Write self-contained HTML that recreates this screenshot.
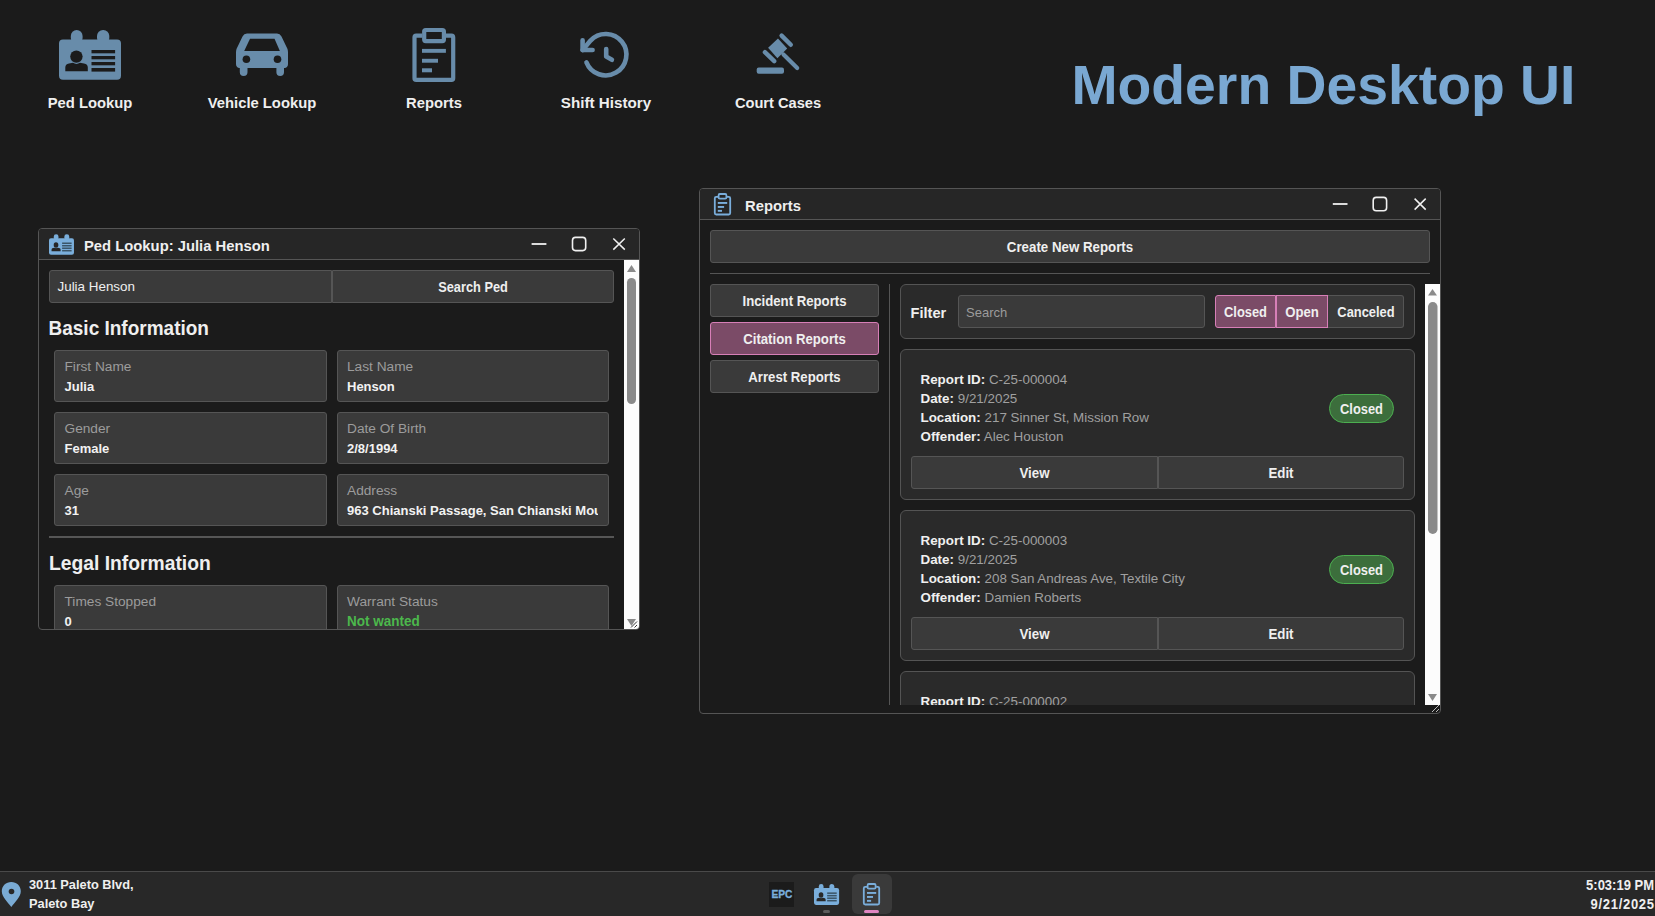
<!DOCTYPE html>
<html><head><meta charset="utf-8">
<style>
*{margin:0;padding:0;box-sizing:border-box}
html,body{width:1655px;height:916px;overflow:hidden;background:#1b1b1b;font-family:"Liberation Sans",sans-serif;color:#efefef;position:relative}
.a{position:absolute}
.t{position:absolute;white-space:nowrap;line-height:1}
.b{font-weight:bold}
.ml{width:172px;text-align:center;font-size:14.8px;font-weight:bold;top:95.5px;color:#efefef}
svg{position:absolute;overflow:visible}
.sy{transform:scaleY(1.08);transform-origin:0 0.847em}
.sy4{transform:scaleY(1.04);transform-origin:0 0.847em}
.sy6{transform:scaleY(1.06);transform-origin:0 0.847em}
.win{border:1px solid #555;border-radius:4px;background:#1b1b1b}
.ttl{background:#262626;border-bottom:1px solid #555}
.inp{background:#3a3a3a;border:1px solid #555}
.fld{width:273px;height:52px;background:#3a3a3a;border:1px solid #555;border-radius:3px}
.lbl{font-size:13.7px;color:#9c9c9c}
.val{font-size:13px;font-weight:bold;color:#f2f2f2}
.pk{background:#7b4b67;border:1px solid #d77fb7}
.pan{background:#2a2a2a;border:1px solid #545454;border-radius:6px}
.pill{background:#3c6e3c;border:1px solid #4caf50;border-radius:15px}
.ct{font-size:13.4px;color:#f0f0f0}
.ct b{font-weight:bold}
.g{color:#a0a0a0}
</style></head><body>

<!-- top menu -->
<svg style="left:0;top:0" width="900" height="130" viewBox="0 0 900 130">
  <g fill="#688caa">
    <!-- ped card -->
    <rect x="70.8" y="30" width="11.8" height="14" rx="5.9"/>
    <rect x="97" y="30" width="12.3" height="14" rx="6"/>
    <rect x="59" y="39.6" width="62" height="40.2" rx="4"/>
  </g>
  <g fill="#1b1b1b">
    <circle cx="76.4" cy="56.6" r="6.2"/>
    <path d="M65.3 71.3 L65.3 67.5 Q65.3 64 69 63.5 L73 62.8 Q76.4 65 80 62.8 L84 63.5 Q87.8 64 87.8 67.5 L87.8 71.3 Z"/>
    <rect x="91.5" y="50" width="23.6" height="3.3"/>
    <rect x="91.5" y="56" width="23.6" height="3.3"/>
    <rect x="91.5" y="62" width="23.6" height="3.3"/>
    <rect x="91.5" y="68" width="23.6" height="3.6"/>
  </g>
  <!-- car -->
  <path fill="#688caa" d="M247 33.6 L277 33.6 Q280 33.6 281.5 36.5 L287.5 49 Q288 50.5 288 52.5 L288 64 Q288 67 285 68 L284 68 L284 72.2 Q284 75.9 280.2 75.9 Q276.4 75.9 276.4 72.2 L276.4 68 L247.5 68 L247.5 72.2 Q247.5 75.9 243.6 75.9 Q239.8 75.9 239.8 72.2 L239.8 68 L239 68 Q236 67 236 64 L236 52.5 Q236 50.5 236.5 49 L242.5 36.5 Q244 33.6 247 33.6 Z"/>
  <g fill="#1b1b1b">
    <path d="M250 38.8 L274.5 38.8 L279.9 50.9 L244.2 50.9 Z"/>
    <circle cx="246.4" cy="59.3" r="3.8"/>
    <circle cx="277.5" cy="59.3" r="3.8"/>
  </g>
  <!-- reports clipboard -->
  <g fill="none" stroke="#688caa" stroke-width="4.2">
    <path d="M422.2 35.7 L416.2 35.7 Q414.5 35.7 414.5 37.4 L414.5 78.2 Q414.5 79.9 416.2 79.9 L451.5 79.9 Q453.2 79.9 453.2 78.2 L453.2 37.4 Q453.2 35.7 451.5 35.7 L445.9 35.7"/>
    <rect x="424.2" y="30" width="19.7" height="11.1" rx="1.5"/>
  </g>
  <g fill="#688caa">
    <rect x="422" y="48.9" width="23.9" height="3.9"/>
    <rect x="422" y="58.8" width="16" height="3.9"/>
    <rect x="422" y="68.3" width="10" height="4"/>
  </g>
  <!-- history -->
  <g fill="none" stroke="#688caa" stroke-width="4.6" stroke-linecap="round" stroke-linejoin="round">
    <path d="M586.45 62.3 A20.7 20.7 0 1 0 590.56 40.58 L582.6 50"/>
    <path d="M582.6 40.2 L582.6 50 L592.6 50"/>
    <path d="M606.2 49 L606.2 56.6 L611.9 59.8"/>
  </g>
  <!-- gavel -->
  <g fill="none" stroke="#688caa" stroke-linecap="round">
    <path d="M781.6 35.6 L790.8 44.8" stroke-width="4.4"/>
    <path d="M764.9 52.2 L774.2 61.2" stroke-width="4.4"/>
    <path d="M783.5 54.5 L797.2 68" stroke-width="4.2"/>
  </g>
  <g fill="#688caa">
    <path d="M778 38.6 L787.2 48.6 L777.4 58.2 L768.1 47.8 Z"/>
    <rect x="756.7" y="67.5" width="27.3" height="6.2" rx="2"/>
  </g>
</svg>
<div class="t ml" style="left:4px">Ped Lookup</div>
<div class="t ml" style="left:176px">Vehicle Lookup</div>
<div class="t ml" style="left:348px">Reports</div>
<div class="t ml" style="left:520px;font-size:15.2px;top:95.2px">Shift History</div>
<div class="t ml" style="left:692px;font-size:14.65px">Court Cases</div>

<div class="t b" style="left:1071.5px;top:57.9px;font-size:55.3px;color:#7aa8d2">Modern Desktop UI</div>

<!-- ===== Ped Lookup window ===== -->
<div class="a win" style="left:38px;top:228px;width:602px;height:402px"></div>
<div class="a ttl" style="left:39px;top:229px;width:600px;height:31px;border-top-left-radius:3px;border-top-right-radius:3px"></div>
<svg style="left:0;top:0" width="1" height="1" viewBox="0 0 1 1">
  <g transform="translate(49 234.2) scale(0.403 0.415)">
    <g transform="translate(-59 -30)">
      <g fill="#7aaedb">
        <rect x="70.8" y="30" width="11.8" height="14" rx="5.9"/>
        <rect x="97" y="30" width="12.3" height="14" rx="6"/>
        <rect x="59" y="39.6" width="62" height="40.2" rx="5"/>
      </g>
      <g fill="#262626">
        <ellipse cx="76.4" cy="56.2" rx="5.8" ry="6.6"/>
        <path d="M65.3 71.3 L65.3 67.5 Q65.3 64 69 63.5 L73 62.8 Q76.4 65 80 62.8 L84 63.5 Q87.8 64 87.8 67.5 L87.8 71.3 Z"/>
      </g>
      <g fill="#3b5568">
        <rect x="91.5" y="50" width="23.6" height="3.6"/>
        <rect x="91.5" y="56" width="23.6" height="3.6"/>
        <rect x="91.5" y="62" width="23.6" height="3.6"/>
        <rect x="91.5" y="68" width="23.6" height="3.6"/>
      </g>
    </g>
  </g>
  <!-- min max close -->
  <g stroke="#f0f0f0" fill="none">
    <path d="M531.6 244 H546.4" stroke-width="1.8"/>
    <rect x="572.5" y="237.4" width="13.2" height="13.2" rx="3" stroke-width="1.6"/>
    <path d="M613.3 238.5 L624.8 249.6 M624.8 238.5 L613.3 249.6" stroke-width="1.5"/>
  </g>
</svg>
<div class="t b" style="left:84px;top:238.5px;font-size:14.8px">Ped Lookup: Julia Henson</div>
<!-- scrollbar -->
<div class="a" style="left:624px;top:260px;width:15px;height:369px;background:#fcfcfc;border-bottom-right-radius:3px"></div>
<svg style="left:0;top:0" width="1" height="1" viewBox="0 0 1 1">
  <g fill="#8a8a8a">
    <path d="M627 272 L636 272 L631.5 265 Z"/>
    <rect x="627" y="278" width="9" height="126" rx="4.5"/>
    <path d="M627 619 L636 619 L631.5 626 Z"/>
  </g>
  <g stroke="#3a3a3a" stroke-width="1">
    <path d="M631 627.5 L637 621.5 M634.5 627.5 L637 625"/>
  </g>
</svg>
<!-- content -->
<div class="a" style="left:39px;top:260px;width:585px;height:369px;overflow:hidden">
 <div class="a" style="left:-39px;top:-260px;width:700px;height:700px">
  <div class="a inp" style="left:49px;top:270px;width:283px;height:33px;border-radius:3px 0 0 3px"></div>
  <div class="t" style="left:57.5px;top:280px;font-size:13.4px">Julia Henson</div>
  <div class="a inp" style="left:332px;top:270px;width:282px;height:33px;border-radius:0 3px 3px 0"></div>
  <div class="t b sy" style="left:332px;width:282px;text-align:center;top:282.3px;font-size:12.8px">Search Ped</div>

  <div class="t b sy6" style="left:48.5px;top:318.8px;font-size:19px">Basic Information</div>

  <div class="a fld" style="left:54px;top:350px"></div>
  <div class="t lbl" style="left:64.5px;top:359.6px">First Name</div>
  <div class="t val sy4" style="left:64.5px;top:380.3px">Julia</div>
  <div class="a fld" style="width:272px;left:337px;top:350px"></div>
  <div class="t lbl" style="left:347px;top:359.6px">Last Name</div>
  <div class="t val sy4" style="left:347px;top:380.3px">Henson</div>

  <div class="a fld" style="left:54px;top:412px"></div>
  <div class="t lbl" style="left:64.5px;top:421.6px">Gender</div>
  <div class="t val sy4" style="left:64.5px;top:442.3px">Female</div>
  <div class="a fld" style="width:272px;left:337px;top:412px"></div>
  <div class="t lbl" style="left:347px;top:421.6px">Date Of Birth</div>
  <div class="t val sy4" style="left:347px;top:442.3px">2/8/1994</div>

  <div class="a fld" style="left:54px;top:474px"></div>
  <div class="t lbl" style="left:64.5px;top:483.6px">Age</div>
  <div class="t val sy4" style="left:64.5px;top:504.3px">31</div>
  <div class="a fld" style="width:272px;left:337px;top:474px"></div>
  <div class="t lbl" style="left:347px;top:483.6px">Address</div>
  <div class="a" style="left:347px;top:500px;width:251px;height:20px;overflow:hidden"><div class="t val sy4" style="left:0;top:4.3px">963 Chianski Passage, San Chianski Mountains</div></div>

  <div class="a" style="left:49px;top:535.5px;width:565px;height:2px;background:#565656"></div>
  <div class="t b sy6" style="left:49px;top:553.5px;font-size:19.3px">Legal Information</div>

  <div class="a fld" style="left:54px;top:585px"></div>
  <div class="t lbl" style="left:64.5px;top:594.6px">Times Stopped</div>
  <div class="t val sy4" style="left:64.5px;top:615.3px">0</div>
  <div class="a fld" style="width:272px;left:337px;top:585px"></div>
  <div class="t lbl" style="left:347px;top:594.6px">Warrant Status</div>
  <div class="t val sy4" style="left:347px;top:615.3px;color:#4cb84c;font-size:13.5px">Not wanted</div>
 </div>
</div>

<!-- ===== Reports window ===== -->
<div class="a win" style="left:699px;top:188px;width:742px;height:526px"></div>
<div class="a ttl" style="left:700px;top:189px;width:740px;height:31px;border-top-left-radius:3px;border-top-right-radius:3px"></div>
<svg style="left:0;top:0" width="1" height="1" viewBox="0 0 1 1">
  <g fill="none" stroke="#7aaedb" stroke-width="1.8">
    <path d="M718.6 196.8 L716.2 196.8 Q714.8 196.8 714.8 198.2 L714.8 213.1 Q714.8 214.5 716.2 214.5 L728.8 214.5 Q730.2 214.5 730.2 213.1 L730.2 198.2 Q730.2 196.8 728.8 196.8 L726.4 196.8"/>
    <rect x="718.6" y="194" width="7.8" height="4.7" rx="1.2"/>
  </g>
  <g fill="#7aaedb">
    <rect x="717.8" y="202" width="9.4" height="1.9"/>
    <rect x="717.8" y="206" width="6.3" height="1.9"/>
    <rect x="717.8" y="209.9" width="4.2" height="1.9"/>
  </g>
  <g stroke="#f0f0f0" fill="none">
    <path d="M1332.8 204 H1347.5" stroke-width="1.8"/>
    <rect x="1373.2" y="197.4" width="13.4" height="13.4" rx="3" stroke-width="1.6"/>
    <path d="M1414.6 198.6 L1425.7 209.6 M1425.7 198.6 L1414.6 209.6" stroke-width="1.5"/>
  </g>
</svg>
<div class="t b" style="left:745px;top:198.5px;font-size:14.8px">Reports</div>

<div class="a inp" style="left:710px;top:230px;width:720px;height:33px;border-radius:3px"></div>
<div class="t b sy" style="left:710px;width:720px;text-align:center;top:240.6px;font-size:13.3px">Create New Reports</div>
<div class="a" style="left:710px;top:273px;width:720px;height:1px;background:#555"></div>

<div class="a inp" style="left:710px;top:284px;width:169px;height:33px;border-radius:3px"></div>
<div class="t b sy" style="left:710px;width:169px;text-align:center;top:294.7px;font-size:13.2px">Incident Reports</div>
<div class="a pk" style="left:710px;top:322px;width:169px;height:33px;border-radius:3px"></div>
<div class="t b sy" style="left:710px;width:169px;text-align:center;top:332.7px;font-size:13.2px">Citation Reports</div>
<div class="a inp" style="left:710px;top:360px;width:169px;height:33px;border-radius:3px"></div>
<div class="t b sy" style="left:710px;width:169px;text-align:center;top:370.7px;font-size:13.2px">Arrest Reports</div>

<div class="a" style="left:889px;top:284px;width:1px;height:421px;background:#555"></div>

<!-- scrollbar -->
<div class="a" style="left:1425px;top:284px;width:15px;height:421px;background:#fcfcfc"></div>
<svg style="left:0;top:0" width="1" height="1" viewBox="0 0 1 1">
  <g fill="#8a8a8a">
    <path d="M1428 295.5 L1437 295.5 L1432.5 289 Z"/>
    <rect x="1428" y="302" width="9.5" height="232" rx="4.7"/>
    <path d="M1428 694 L1437 694 L1432.5 701 Z"/>
  </g>
  <g stroke="#bbb" stroke-width="1">
    <path d="M1432 712 L1439 705 M1436 712 L1439 709"/>
  </g>
</svg>

<div class="a" style="left:900px;top:284px;width:525px;height:421px;overflow:hidden">
 <div class="a" style="left:-900px;top:-284px;width:1500px;height:1000px">
  <div class="a pan" style="left:900px;top:284px;width:515px;height:55px"></div>
  <div class="t b sy4" style="left:910.5px;top:305.5px;font-size:14.6px">Filter</div>
  <div class="a inp" style="left:958px;top:295px;width:247px;height:33px;border-radius:3px"></div>
  <div class="t" style="left:966px;top:305.9px;font-size:13px;color:#9c9c9c">Search</div>
  <div class="a pk" style="left:1215px;top:295px;width:61px;height:33px;border-radius:3px 0 0 3px"></div>
  <div class="a pk" style="left:1276px;top:295px;width:52px;height:33px"></div>
  <div class="a inp" style="left:1328px;top:295px;width:76px;height:33px;border-radius:0 3px 3px 0;border-left:none"></div>
  <div class="t b sy" style="left:1215px;width:61px;text-align:center;top:306.7px;font-size:12.9px">Closed</div>
  <div class="t b sy" style="left:1276px;width:52px;text-align:center;top:306.3px;font-size:13.2px">Open</div>
  <div class="t b sy" style="left:1328px;width:76px;text-align:center;top:306.7px;font-size:12.9px">Canceled</div>

  <div class="a pan" style="left:900px;top:349px;width:515px;height:151px"></div>
  <div class="t ct" style="left:920.5px;top:372.7px"><b>Report ID:</b> <span class="g">C-25-000004</span></div>
  <div class="t ct" style="left:920.5px;top:391.7px"><b>Date:</b> <span class="g">9/21/2025</span></div>
  <div class="t ct" style="left:920.5px;top:410.7px"><b>Location:</b> <span class="g">217 Sinner St, Mission Row</span></div>
  <div class="t ct" style="left:920.5px;top:429.7px"><b>Offender:</b> <span class="g">Alec Houston</span></div>
  <div class="a pill" style="left:1329px;top:394px;width:65px;height:29px"></div>
  <div class="t b sy" style="left:1329px;width:65px;text-align:center;top:404.3px;font-size:12.9px">Closed</div>
  <div class="a inp" style="left:911px;top:456px;width:247px;height:33px;border-radius:3px 0 0 3px"></div>
  <div class="a inp" style="left:1158px;top:456px;width:246px;height:33px;border-radius:0 3px 3px 0"></div>
  <div class="t b sy" style="left:911px;width:247px;text-align:center;top:467.2px;font-size:13.3px">View</div>
  <div class="t b sy" style="left:1158px;width:246px;text-align:center;top:467.2px;font-size:13.3px">Edit</div>

  <div class="a pan" style="left:900px;top:510px;width:515px;height:151px"></div>
  <div class="t ct" style="left:920.5px;top:533.7px"><b>Report ID:</b> <span class="g">C-25-000003</span></div>
  <div class="t ct" style="left:920.5px;top:552.7px"><b>Date:</b> <span class="g">9/21/2025</span></div>
  <div class="t ct" style="left:920.5px;top:571.7px"><b>Location:</b> <span class="g">208 San Andreas Ave, Textile City</span></div>
  <div class="t ct" style="left:920.5px;top:590.7px"><b>Offender:</b> <span class="g">Damien Roberts</span></div>
  <div class="a pill" style="left:1329px;top:555px;width:65px;height:29px"></div>
  <div class="t b sy" style="left:1329px;width:65px;text-align:center;top:565.3px;font-size:12.9px">Closed</div>
  <div class="a inp" style="left:911px;top:617px;width:247px;height:33px;border-radius:3px 0 0 3px"></div>
  <div class="a inp" style="left:1158px;top:617px;width:246px;height:33px;border-radius:0 3px 3px 0"></div>
  <div class="t b sy" style="left:911px;width:247px;text-align:center;top:628.2px;font-size:13.3px">View</div>
  <div class="t b sy" style="left:1158px;width:246px;text-align:center;top:628.2px;font-size:13.3px">Edit</div>

  <div class="a pan" style="left:900px;top:671px;width:515px;height:151px"></div>
  <div class="t ct" style="left:920.5px;top:694.7px"><b>Report ID:</b> <span class="g">C-25-000002</span></div>
  <div class="t ct" style="left:920.5px;top:713.7px"><b>Date:</b> <span class="g">9/21/2025</span></div>
  <div class="t ct" style="left:920.5px;top:732.7px"><b>Location:</b> <span class="g">1 Vespucci Blvd, Del Perro</span></div>
  <div class="t ct" style="left:920.5px;top:751.7px"><b>Offender:</b> <span class="g">John Smith</span></div>
  <div class="a pill" style="left:1329px;top:716px;width:65px;height:29px"></div>
  <div class="t b sy" style="left:1329px;width:65px;text-align:center;top:726.3px;font-size:12.9px">Closed</div>
  <div class="a inp" style="left:911px;top:778px;width:247px;height:33px;border-radius:3px 0 0 3px"></div>
  <div class="a inp" style="left:1158px;top:778px;width:246px;height:33px;border-radius:0 3px 3px 0"></div>
  <div class="t b sy" style="left:911px;width:247px;text-align:center;top:789.2px;font-size:13.3px">View</div>
  <div class="t b sy" style="left:1158px;width:246px;text-align:center;top:789.2px;font-size:13.3px">Edit</div>

 </div>
</div>

<!--WINDOWS-->

<!-- taskbar -->
<div class="a" style="left:0;top:871px;width:1655px;height:45px;background:#282828;border-top:1px solid #4a4a4a"></div>
<svg style="left:0;top:871px" width="30" height="45" viewBox="0 871 30 45">
  <path fill="#7aabd4" d="M11.3 882.1 C6 882.1 1.8 886 1.8 891.3 C1.8 897 8 902.5 11.3 907.1 C14.6 902.5 20.8 897 20.8 891.3 C20.8 886 16.6 882.1 11.3 882.1 Z"/>
  <circle cx="11.5" cy="891.5" r="2.8" fill="#282828"/>
</svg>
<div class="t b" style="left:29px;top:878.9px;font-size:12.8px">3011 Paleto Blvd,</div>
<div class="t b" style="left:29px;top:898px;font-size:12.8px">Paleto Bay</div>
<div class="t b sy" style="left:1555px;top:878.5px;font-size:13px;width:99px;text-align:right">5:03:19 PM</div>
<div class="t b sy" style="left:1555px;top:898px;font-size:13px;width:99.7px;text-align:right;letter-spacing:0.7px">9/21/2025</div>


<div class="a" style="left:769px;top:882px;width:25px;height:25px;background:#1b1b1b"></div>
<div class="t b" style="left:769.5px;width:25px;text-align:center;top:890.2px;font-size:10.2px;color:#7aaedb;letter-spacing:0px;-webkit-text-stroke:0.3px #7aaedb">EPC</div>
<div class="a" style="left:852px;top:874px;width:40px;height:40px;background:#3a3a3a;border-radius:6px"></div>
<div class="a" style="left:823px;top:910px;width:7px;height:3px;background:#5c5c5c;border-radius:1.5px"></div>
<div class="a" style="left:864px;top:910px;width:15px;height:3px;background:#e086c2;border-radius:1.5px"></div>
<svg style="left:0;top:0" width="1" height="1" viewBox="0 0 1 1">
  <g transform="translate(814 884) scale(0.405 0.42)">
    <g transform="translate(-59 -30)">
      <g fill="#7aaedb">
        <rect x="70.8" y="30" width="11.8" height="14" rx="5.9"/>
        <rect x="97" y="30" width="12.3" height="14" rx="6"/>
        <rect x="59" y="39.6" width="62" height="40.2" rx="5"/>
      </g>
      <g fill="#282828">
        <ellipse cx="76.4" cy="56.2" rx="5.8" ry="6.6"/>
        <path d="M65.3 71.3 L65.3 67.5 Q65.3 64 69 63.5 L73 62.8 Q76.4 65 80 62.8 L84 63.5 Q87.8 64 87.8 67.5 L87.8 71.3 Z"/>
      </g>
      <g fill="#3b5568">
        <rect x="91.5" y="50" width="23.6" height="3.6"/>
        <rect x="91.5" y="56" width="23.6" height="3.6"/>
        <rect x="91.5" y="62" width="23.6" height="3.6"/>
        <rect x="91.5" y="68" width="23.6" height="3.6"/>
      </g>
    </g>
  </g>
  <g fill="none" stroke="#7aaedb" stroke-width="1.8">
    <path d="M867 886.8 L865.2 886.8 Q863.8 886.8 863.8 888.2 L863.8 903.1 Q863.8 904.5 865.2 904.5 L877.8 904.5 Q879.2 904.5 879.2 903.1 L879.2 888.2 Q879.2 886.8 877.8 886.8 L876.2 886.8"/>
    <rect x="867.6" y="884" width="8" height="4.6" rx="1.2"/>
  </g>
  <g fill="#7aaedb">
    <rect x="867" y="892" width="9.2" height="1.9"/>
    <rect x="867" y="896" width="6" height="1.9"/>
    <rect x="867" y="899.9" width="4.1" height="1.9"/>
  </g>
</svg>


</body></html>
